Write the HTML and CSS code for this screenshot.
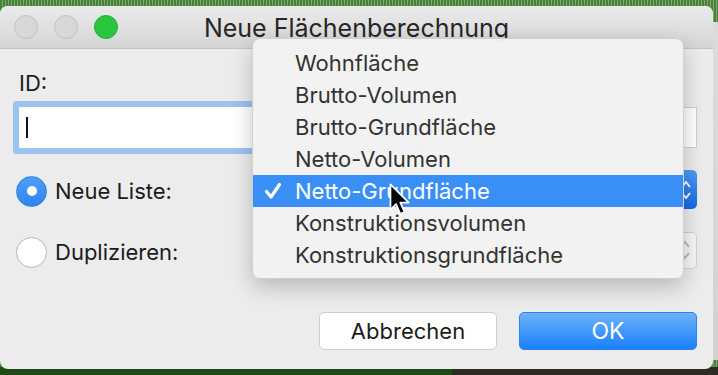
FILE: index.html
```html
<!DOCTYPE html>
<html lang="de">
<head>
  <meta charset="UTF-8">
  <title>Neue Flächenberechnung</title>
  <link rel="stylesheet" href="styles.css">
</head>
<body>
  <div class="desktop">
    <div class="window">
      <div class="titlebar">
        <div class="lights">
          <span class="light"></span>
          <span class="light"></span>
          <span class="light green"></span>
        </div>
        <div class="title">Neue Flächenberechnung</div>
        <div></div>
      </div>

      <div class="content">
        <div class="label">ID:</div>
        <div class="field-row">
          <div class="field focused"><span class="caret"></span></div>
          <div class="field rest"></div>
        </div>

        <div class="option-row first">
          <span class="radio checked"></span>
          <span class="option-text">Neue Liste:</span>
          <div class="popup blue">
            <svg class="chevrons" width="10" height="22" viewBox="0 0 10 22"><path d="M1 8 L5 3 L9 8 M1 14 L5 19 L9 14" fill="none" stroke="#fff" stroke-width="2"/></svg>
          </div>
        </div>

        <div class="option-row second">
          <span class="radio"></span>
          <span class="option-text">Duplizieren:</span>
          <div class="popup gray">
            <svg class="chevrons" width="10" height="22" viewBox="0 0 10 22"><path d="M1 8 L5 3 L9 8 M1 14 L5 19 L9 14" fill="none" stroke="#b9b9b9" stroke-width="2"/></svg>
          </div>
        </div>

        <div class="buttons">
          <button type="button" class="btn">Abbrechen</button>
          <button type="button" class="btn primary">OK</button>
        </div>
      </div>

      <div class="menu">
        <div class="item">Wohnfläche</div>
        <div class="item">Brutto-Volumen</div>
        <div class="item">Brutto-Grundfläche</div>
        <div class="item">Netto-Volumen</div>
        <div class="item selected">
          <svg class="check" width="18" height="18" viewBox="0 0 18 18"><path d="M2.5 9.5 L7 15 L15.5 2.5" fill="none" stroke="#fff" stroke-width="3.2" stroke-linecap="round" stroke-linejoin="round"/></svg>
          Netto-Grundfläche
        </div>
        <div class="item">Konstruktionsvolumen</div>
        <div class="item">Konstruktionsgrundfläche</div>
      </div>

      <svg class="cursor" width="24" height="35" viewBox="0 0 17 25">
        <path d="M1 1 V19 L5 15 L8 22 L11 20.7 L8 14 H14 Z" fill="#000" stroke="#fff" stroke-width="1.2" stroke-linejoin="round"/>
      </svg>
    </div>
  </div>
</body>
</html>
```

FILE: styles.css
```css
* {
  margin: 0;
  padding: 0;
  box-sizing: border-box;
}

body {
  width: 718px;
  height: 375px;
  overflow: hidden;
  font-family: Inter, "Liberation Sans", sans-serif;
}

.desktop {
  width: 718px;
  height: 375px;
  padding-top: 6px;
  background:
    linear-gradient(#dcdcdc, #d2d2d2) right 0 top 22px / 5px 338px no-repeat,
    linear-gradient(to right, #1c4a12 0, #1c4a12 452px, #2b2b24 452px) bottom / 100% 8px no-repeat,
    repeating-linear-gradient(90deg, #3c8a2c 0, #3c8a2c 2px, #8f9a8a 2px, #8f9a8a 3px);
}

.window {
  position: relative;
  width: 713px;
  height: 363px;
  background-color: #ececec;
  border-radius: 8px;
  overflow: hidden;
}

/* title bar */
.titlebar {
  height: 43px;
  display: grid;
  grid-template-columns: 1fr auto 1fr;
  align-items: center;
  background: linear-gradient(#ebebeb, #d5d5d5);
  border-bottom: 1px solid #c4c4c4;
}
.lights {
  display: flex;
  gap: 16px;
  padding-left: 14px;
}
.light {
  width: 24px;
  height: 24px;
  border-radius: 50%;
  background-color: #d8d8d8;
  border: 1px solid #c0c0c0;
}
.light.green {
  background-color: #2ac63f;
  border-color: #22b036;
}
.title {
  font-size: 25px;
  color: #262626;
  padding-top: 2px;
}

/* body */
.content {
  display: flex;
  flex-direction: column;
  padding: 0 16px 0 12px;
  color: #1b1b1b;
}
.label {
  font-size: 22px;
  line-height: 26px;
  margin: 21px 0 0 7px;
}
.field-row {
  display: flex;
  height: 41px;
  margin: 11px 0 0 7px;
}
.field {
  background-color: #fff;
  height: 41px;
}
.field.focused {
  width: 400px;
  border-radius: 1px;
  box-shadow: 0 0 0 6px #9cc2ef;
  display: flex;
  align-items: center;
  padding-left: 7px;
}
.caret {
  width: 2px;
  height: 21px;
  background-color: #111;
}
.field.rest {
  flex: 1;
  border: 1px solid #cfcfcf;
  border-left: 0;
}

.option-row {
  display: flex;
  align-items: center;
  height: 32px;
  padding-left: 4px;
}
.option-row.first {
  margin-top: 27px;
}
.option-row.second {
  margin-top: 29px;
}
.radio {
  width: 31px;
  height: 31px;
  border-radius: 50%;
  background-color: #fff;
  border: 1px solid #b5b5b5;
  display: flex;
  align-items: center;
  justify-content: center;
}
.radio.checked {
  background: linear-gradient(#4d9ff7, #2f84f0);
  border-color: #2f7fe6;
}
.radio.checked::after {
  content: "";
  width: 10px;
  height: 10px;
  border-radius: 50%;
  background-color: #fff;
}
.option-text {
  font-size: 22px;
  margin-left: 8px;
}
.popup {
  margin-left: auto;
  width: 140px;
  border-radius: 5px;
  display: flex;
  align-items: center;
  justify-content: flex-end;
  padding-right: 6px;
}
.popup.blue {
  height: 39px;
  margin-top: -3px;
  background: linear-gradient(#4d9cf6, #1768e4);
}
.popup.gray {
  height: 37px;
  margin-top: -4px;
  background-color: #f7f7f7;
  border: 1px solid #d2d2d2;
}

.buttons {
  display: flex;
  justify-content: flex-end;
  gap: 22px;
  margin-top: 44px;
}
.btn {
  width: 178px;
  height: 38px;
  border-radius: 5px;
  font-family: Inter, "Liberation Sans", sans-serif;
  font-size: 22px;
  color: #1b1b1b;
  background-color: #fff;
  border: 1px solid #cdcdcd;
}
.btn.primary {
  color: #fff;
  font-size: 23px;
  border-color: #2a80f0;
  background: linear-gradient(#6db2fa, #1a80fb);
}

/* dropdown menu over the dialog */
.menu {
  position: absolute;
  left: 252px;
  top: 32px;
  width: 432px;
  padding: 8px 0 7px;
  background-color: rgba(242, 242, 242, 0.98);
  border: 1px solid #cfcfcf;
  border-radius: 8px;
  box-shadow: 0 8px 22px rgba(0, 0, 0, 0.22);
}
.item {
  position: relative;
  height: 32px;
  line-height: 32px;
  padding-left: 42px;
  font-size: 22px;
  color: #333;
}
.item.selected {
  background-color: #3a8ff6;
  color: #fff;
}
.check {
  position: absolute;
  left: 11px;
  top: 7px;
}

.cursor {
  position: absolute;
  left: 389px;
  top: 177px;
}
```
